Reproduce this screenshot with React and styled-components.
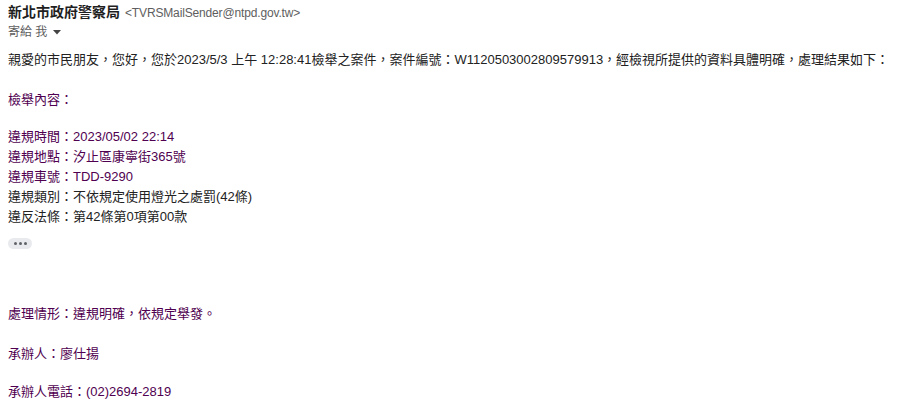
import React from "react";
import styled, { createGlobalStyle } from "styled-components";

const Global = createGlobalStyle`
  html, body { margin: 0; padding: 0; background: #fff; }
  body { font-family: "Liberation Sans", Arial, "Noto Sans CJK TC", sans-serif; }
`;

const Page = styled.div`
  padding: 0 8px;
  width: 898px;
  box-sizing: border-box;
`;

const Header = styled.div`
  display: flex;
  flex-direction: column;
  padding-top: 2px;
`;

const SenderRow = styled.div`
  display: flex;
  align-items: baseline;
  gap: 5px;
  height: 20px;
  line-height: 20px;
`;

const SenderName = styled.span`
  font-size: 14px;
  font-weight: bold;
  color: #1f1f1f;
`;

const SenderEmail = styled.span`
  font-size: 12px;
  letter-spacing: -0.15px;
  color: #5e5e5e;
`;

const ToRow = styled.div`
  display: flex;
  align-items: center;
  gap: 4px;
  font-size: 12px;
  color: #5e5e5e;
  height: 20px;
  line-height: 20px;
`;

const Caret = styled.svg`
  width: 10px;
  height: 10px;
  margin-left: 1px;
`;

const Body = styled.div`
  font-size: 13px;
  color: #222;
  line-height: 20px;
  padding-top: 8px;
`;

const Line = styled.div`
  color: ${(p) => (p.$purple ? "#500050" : "#222")};
  margin-top: ${(p) => p.$gap || 0}px;
  white-space: nowrap;
`;

const MoreButton = styled.div`
  display: flex;
  align-items: center;
  justify-content: center;
  gap: 2px;
  width: 24px;
  height: 11px;
  border-radius: 6px;
  background: #e8eaed;
  margin-top: 11px;
`;

const Dot = styled.span`
  width: 3px;
  height: 3px;
  border-radius: 50%;
  background: #5f6368;
`;

export default function App() {
  return (
    <>
      <Global />
      <Page>
        <Header>
          <SenderRow>
            <SenderName>新北市政府警察局</SenderName>
            <SenderEmail>&lt;TVRSMailSender@ntpd.gov.tw&gt;</SenderEmail>
          </SenderRow>
          <ToRow>
            <span>寄給 我</span>
            <Caret viewBox="0 0 10 10">
              <path d="M1 3 L9 3 L5 7.5 Z" fill="#444" />
            </Caret>
          </ToRow>
        </Header>
        <Body>
          <Line>
            親愛的市民朋友，您好，您於2023/5/3 上午 12:28:41檢舉之案件，案件編號：W1120503002809579913，經檢視所提供的資料具體明確，處理結果如下：
          </Line>
          <Line $purple $gap={20}>檢舉內容：</Line>
          <Line $purple $gap={17}>違規時間：2023/05/02 22:14</Line>
          <Line $purple>違規地點：汐止區康寧街365號</Line>
          <Line $purple>違規車號：TDD-9290</Line>
          <Line>違規類別：不依規定使用燈光之處罰(42條)</Line>
          <Line>違反法條：第42條第0項第00款</Line>
          <MoreButton>
            <Dot />
            <Dot />
            <Dot />
          </MoreButton>
          <Line $purple $gap={55}>處理情形：違規明確，依規定舉發。</Line>
          <Line $purple $gap={20}>承辦人：廖仕揚</Line>
          <Line $purple $gap={18}>承辦人電話：(02)2694-2819</Line>
        </Body>
      </Page>
    </>
  );
}
